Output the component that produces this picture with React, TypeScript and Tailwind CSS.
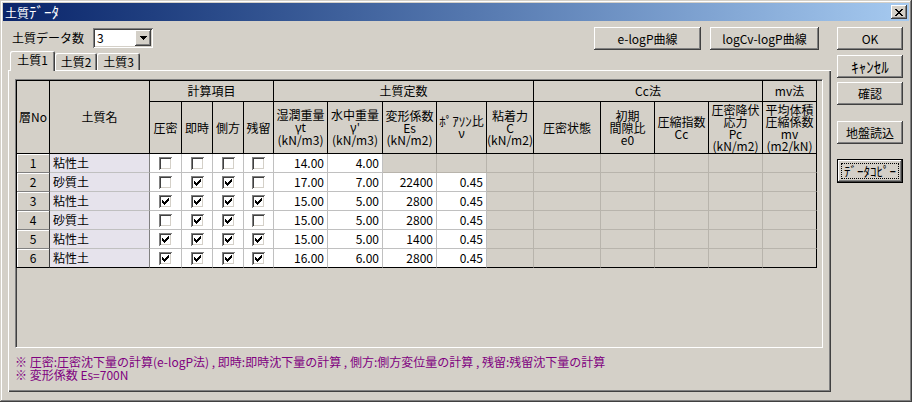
import React from "react";

type Kids = { children?: React.ReactNode; className?: string };

function Btn({ children, className = "" }: Kids) {
  return (
    <div
      className={`flex items-center justify-center whitespace-nowrap bg-[#d4d0c8] shadow-[inset_-1px_-1px_0_#404040,inset_1px_1px_0_#ffffff,inset_-2px_-2px_0_#808080] ${className}`}
    >
      {children}
    </div>
  );
}

function Check() {
  return (
    <svg width="7" height="7" viewBox="0 0 7 7" shapeRendering="crispEdges">
      <path
        fill="#000"
        d="M6 0h1v1h-1z M5 1h2v1h-2z M0 2h1v1h-1z M4 2h3v1h-3z M0 3h2v1h-2z M3 3h3v1h-3z M0 4h5v1h-5z M1 5h3v1h-3z M2 6h1v1h-1z"
      />
    </svg>
  );
}

function CheckBox({ on }: { on: boolean }) {
  return (
    <div className="w-[13px] h-[13px] bg-white flex items-center justify-center shadow-[inset_1px_1px_0_#808080,inset_-1px_-1px_0_#ffffff,inset_2px_2px_0_#404040,inset_-2px_-2px_0_#d4d0c8]">
      {on ? <Check /> : null}
    </div>
  );
}

function H({ children, className = "" }: Kids) {
  return (
    <div
      className={`bg-[#d4d0c8] border-r border-b border-black flex items-center justify-center ${className}`}
    >
      <div className="text-center leading-[12px]">{children}</div>
    </div>
  );
}

const G = ({ children }: Kids) => (
  <span className="[font-family:'Noto_Sans',sans-serif]">{children}</span>
);

const HK = ({ children }: Kids) => <span className="text-[13px]">{children}</span>;
const HKL = ({ children }: Kids) => <span className="text-[15px] leading-[12px]">{children}</span>;

type Row = {
  no: number;
  name: string;
  c: number[];
  wt: string;
  ws: string;
  es: string;
  nu: string;
};

const rows: Row[] = [
  { no: 1, name: "粘性土", c: [0, 0, 0, 0], wt: "14.00", ws: "4.00", es: "", nu: "" },
  { no: 2, name: "砂質土", c: [0, 1, 1, 0], wt: "17.00", ws: "7.00", es: "22400", nu: "0.45" },
  { no: 3, name: "粘性土", c: [1, 1, 1, 1], wt: "15.00", ws: "5.00", es: "2800", nu: "0.45" },
  { no: 4, name: "砂質土", c: [0, 1, 1, 0], wt: "15.00", ws: "5.00", es: "2800", nu: "0.45" },
  { no: 5, name: "粘性土", c: [1, 1, 1, 1], wt: "15.00", ws: "5.00", es: "1400", nu: "0.45" },
  { no: 6, name: "粘性土", c: [1, 1, 1, 1], wt: "16.00", ws: "6.00", es: "2800", nu: "0.45" },
];

function DataRow({ r, last }: { r: Row; last: boolean }) {
  const wb = last ? "border-b-black" : "border-b-[#c0c0c0]";
  const gb = last ? "border-b-black" : "border-b-[#b8b4ac]";
  const white = `bg-white border-r border-b border-r-[#c0c0c0] ${wb}`;
  const gray = `bg-[#d4d0c8] border-r border-b border-r-[#b8b4ac] ${gb}`;
  return (
    <>
      <div
        className={`bg-[#d4d0c8] border-r border-b border-r-[#404040] ${last ? "border-b-black" : "border-b-[#808080]"} shadow-[inset_1px_1px_0_#ffffff] flex items-center justify-center`}
      >
        {r.no}
      </div>
      <div
        className={`bg-[#e6e3ec] border-r border-b border-r-[#808080] ${wb} flex items-center pl-[3px]`}
      >
        {r.name}
      </div>
      {r.c.map((v, i) => (
        <div key={i} className={`${white} flex items-center justify-center`}>
          <CheckBox on={v === 1} />
        </div>
      ))}
      <div className={`${white} flex items-center justify-end pr-[3px]`}>{r.wt}</div>
      <div className={`${white} flex items-center justify-end pr-[3px]`}>{r.ws}</div>
      {r.es ? (
        <div className={`${white} flex items-center justify-end pr-[3px]`}>{r.es}</div>
      ) : (
        <div className={gray} />
      )}
      {r.nu ? (
        <div className={`${white} flex items-center justify-end pr-[3px]`}>{r.nu}</div>
      ) : (
        <div className={gray} />
      )}
      <div className={gray} />
      <div className={gray} />
      <div className={gray} />
      <div className={gray} />
      <div className={gray} />
      <div className={`bg-[#d4d0c8] border-r border-b border-r-black ${gb}`} />
    </>
  );
}

export default function App() {
  return (
    <div className="w-[912px] h-[402px] bg-[#d4d0c8] p-[3px] flex flex-col overflow-hidden text-[12px] leading-[12px] text-black [font-family:'Noto_Sans_CJK_JP',sans-serif] shadow-[inset_-1px_-1px_0_#404040,inset_1px_1px_0_#d4d0c8,inset_-2px_-2px_0_#808080,inset_2px_2px_0_#ffffff]">
      {/* Title bar */}
      <div className="h-[18px] shrink-0 flex items-center bg-linear-to-r from-[#0a246a] to-[#a6caf0] pl-[2px] pr-[2px] text-white">
        <span>
          土質<HKL>ﾃﾞｰﾀ</HKL>
        </span>
        <Btn className="ml-auto w-[16px] h-[14px]">
          <svg width="8" height="7" viewBox="0 0 8 7" shapeRendering="crispEdges">
            <path
              fill="#000"
              d="M0 0h2v1h-2z M6 0h2v1h-2z M1 1h2v1h-2z M5 1h2v1h-2z M2 2h4v1h-4z M3 3h2v1h-2z M2 4h4v1h-4z M1 5h2v1h-2z M5 5h2v1h-2z M0 6h2v1h-2z M6 6h2v1h-2z"
            />
          </svg>
        </Btn>
      </div>

      <div className="flex flex-1 min-h-0">
        {/* Left part */}
        <div className="ml-[5px] w-[823px] flex flex-col">
          {/* top row */}
          <div className="mt-[6px] h-[24px] flex items-start">
            <div className="mt-[1px] w-[85px] h-[20px] pl-[4px] flex items-center">土質データ数</div>
            <div className="mt-[1px] w-[60px] h-[20px] bg-white p-[2px] flex items-center shadow-[inset_1px_1px_0_#808080,inset_-1px_-1px_0_#ffffff,inset_2px_2px_0_#404040,inset_-2px_-2px_0_#d4d0c8]">
              <span className="pl-[2px]">3</span>
              <Btn className="ml-auto w-[16px] h-[16px]">
                <svg width="7" height="4" viewBox="0 0 7 4" shapeRendering="crispEdges">
                  <path fill="#000" d="M0 0h7v1h-7z M1 1h5v1h-5z M2 2h3v1h-3z M3 3h1v1h-1z" />
                </svg>
              </Btn>
            </div>
            <Btn className="ml-auto w-[107px] h-[23px]">e-logP曲線</Btn>
            <Btn className="ml-[9px] mr-[12px] w-[109px] h-[23px]">logCv-logP曲線</Btn>
          </div>

          {/* tabs */}
          <div className="h-[19px] pl-[2px] flex items-end relative z-10">
            <div className="w-[45px] h-[20px] -mb-px pb-[2px] bg-[#d4d0c8] flex items-center justify-center rounded-t-[2px] shadow-[inset_1px_1px_0_#ffffff,inset_-1px_0_0_#404040,inset_-2px_0_0_#808080]">
              土質1
            </div>
            <div className="w-[42px] h-[17px] bg-[#d4d0c8] flex items-center justify-center rounded-t-[2px] shadow-[inset_1px_1px_0_#ffffff,inset_-1px_0_0_#404040,inset_-2px_0_0_#808080]">
              土質2
            </div>
            <div className="w-[43px] h-[17px] bg-[#d4d0c8] flex items-center justify-center rounded-t-[2px] shadow-[inset_1px_1px_0_#ffffff,inset_-1px_0_0_#404040,inset_-2px_0_0_#808080]">
              土質3
            </div>
          </div>

          {/* tab panel */}
          <div className="h-[322px] bg-[#d4d0c8] pl-[7px] pt-[9px] flex flex-col shadow-[inset_1px_1px_0_#ffffff,inset_-1px_-1px_0_#404040,inset_-2px_-2px_0_#808080]">
            <div className="w-[808px] h-[269px] bg-[#d4d0c8] border border-t-[#808080] border-l-[#808080] border-r-white border-b-white shadow-[inset_1px_1px_0_#404040]">
              <div className="w-max grid grid-cols-[33px_100px_32px_31px_31px_30px_54px_55px_54px_50px_47px_67px_54px_54px_54px_54px] grid-rows-[21px_52px_19px_19px_19px_19px_19px_19px] border-l border-t border-black">
                <H className="row-span-2">層No</H>
                <H className="row-span-2">土質名</H>
                <H className="col-span-4">計算項目</H>
                <H className="col-span-5">土質定数</H>
                <H className="col-span-4">Cc法</H>
                <H>mv法</H>

                <H>圧密</H>
                <H>即時</H>
                <H>側方</H>
                <H>残留</H>
                <H>
                  湿潤重量
                  <br />
                  <G>γt</G>
                  <br />
                  (kN/m3)
                </H>
                <H>
                  水中重量
                  <br />
                  <G>γ'</G>
                  <br />
                  (kN/m3)
                </H>
                <H>
                  変形係数
                  <br />
                  Es
                  <br />
                  (kN/m2)
                </H>
                <H>
                  <HK>ﾎﾟｱｿﾝ</HK>比
                  <br />
                  <G>ν</G>
                </H>
                <H>
                  粘着力
                  <br />
                  C
                  <br />
                  (kN/m2)
                </H>
                <H>圧密状態</H>
                <H>
                  初期
                  <br />
                  間隙比
                  <br />
                  e0
                </H>
                <H>
                  圧縮指数
                  <br />
                  Cc
                </H>
                <H>
                  圧密降伏
                  <br />
                  応力
                  <br />
                  Pc
                  <br />
                  (kN/m2)
                </H>
                <H>
                  平均体積
                  <br />
                  圧縮係数
                  <br />
                  mv
                  <br />
                  (m2/kN)
                </H>

                {rows.map((r, i) => (
                  <DataRow key={r.no} r={r} last={i === rows.length - 1} />
                ))}
              </div>
            </div>

            <div className="mt-[7px] leading-[13px] text-[#800080]">
              <div>※ 圧密:圧密沈下量の計算(e-logP法) , 即時:即時沈下量の計算 , 側方:側方変位量の計算 , 残留:残留沈下量の計算</div>
              <div>※ 変形係数 Es=700N</div>
            </div>
          </div>
        </div>

        {/* Right buttons */}
        <div className="ml-[6px] w-[66px] pt-[6px] flex flex-col">
          <Btn className="h-[23px]">OK</Btn>
          <Btn className="mt-[5px] h-[23px]">
            <HKL>ｷｬﾝｾﾙ</HKL>
          </Btn>
          <Btn className="mt-[4px] h-[23px]">確認</Btn>
          <Btn className="mt-[16px] h-[23px]">地盤読込</Btn>
          <div className="mt-[15px] h-[24px] border border-black flex bg-[#d4d0c8] shadow-[inset_-1px_-1px_0_#404040,inset_1px_1px_0_#ffffff,inset_-2px_-2px_0_#808080]">
            <div className="m-[3px] flex-1 whitespace-nowrap border border-dotted border-black flex items-center justify-center">
              <span className="text-[13px] leading-[12px]">ﾃﾞｰﾀｺﾋﾟｰ</span>
            </div>
          </div>
        </div>
      </div>
    </div>
  );
}
